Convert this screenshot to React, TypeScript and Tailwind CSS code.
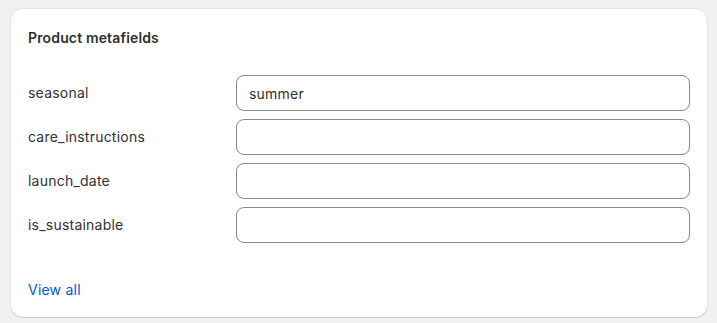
import React from 'react';

const FIELDS = [
  { key: 'seasonal', value: 'summer' },
  { key: 'care_instructions', value: '' },
  { key: 'launch_date', value: '' },
  { key: 'is_sustainable', value: '' },
];

const App: React.FC = () => {
  return (
    <div
      className="min-h-screen bg-[#f1f1f1] pt-[9px] pl-[11px]"
      style={{ fontFamily: 'Inter, "Noto Sans", sans-serif' }}
    >
      <div className="w-[696px] h-[308px] bg-white rounded-[12px] shadow-[0_1px_0_0_rgba(0,0,0,0.13),0_0_0_1px_rgba(0,0,0,0.05)] px-[17px] pt-[19px] flex flex-col">
        <h2 className="text-[14px] leading-[20px] font-semibold tracking-[0.15px] text-[#303030]">Product metafields</h2>

        {/* Metafield rows */}
        <div className="mt-[27px] flex flex-col gap-[8px]">
          {FIELDS.map((f) => (
            <div key={f.key} className="flex items-center">
              <span className="w-[208px] text-[14px] leading-[20px] tracking-[0.22px] text-[#303030]">{f.key}</span>
              <input
                readOnly
                value={f.value}
                className="flex-1 h-[36px] rounded-[8px] border border-[#8a8a8a] px-[12px] text-[14px] tracking-[0.22px] text-[#303030] outline-none bg-white"
                style={{ fontFamily: 'Inter, "Noto Sans", sans-serif' }}
              />
            </div>
          ))}
        </div>

        <a href="#" className="mt-[37px] text-[14px] leading-[20px] tracking-[0.22px] text-[#005bd3] w-fit">View all</a>
      </div>
    </div>
  );
};

export default App;
